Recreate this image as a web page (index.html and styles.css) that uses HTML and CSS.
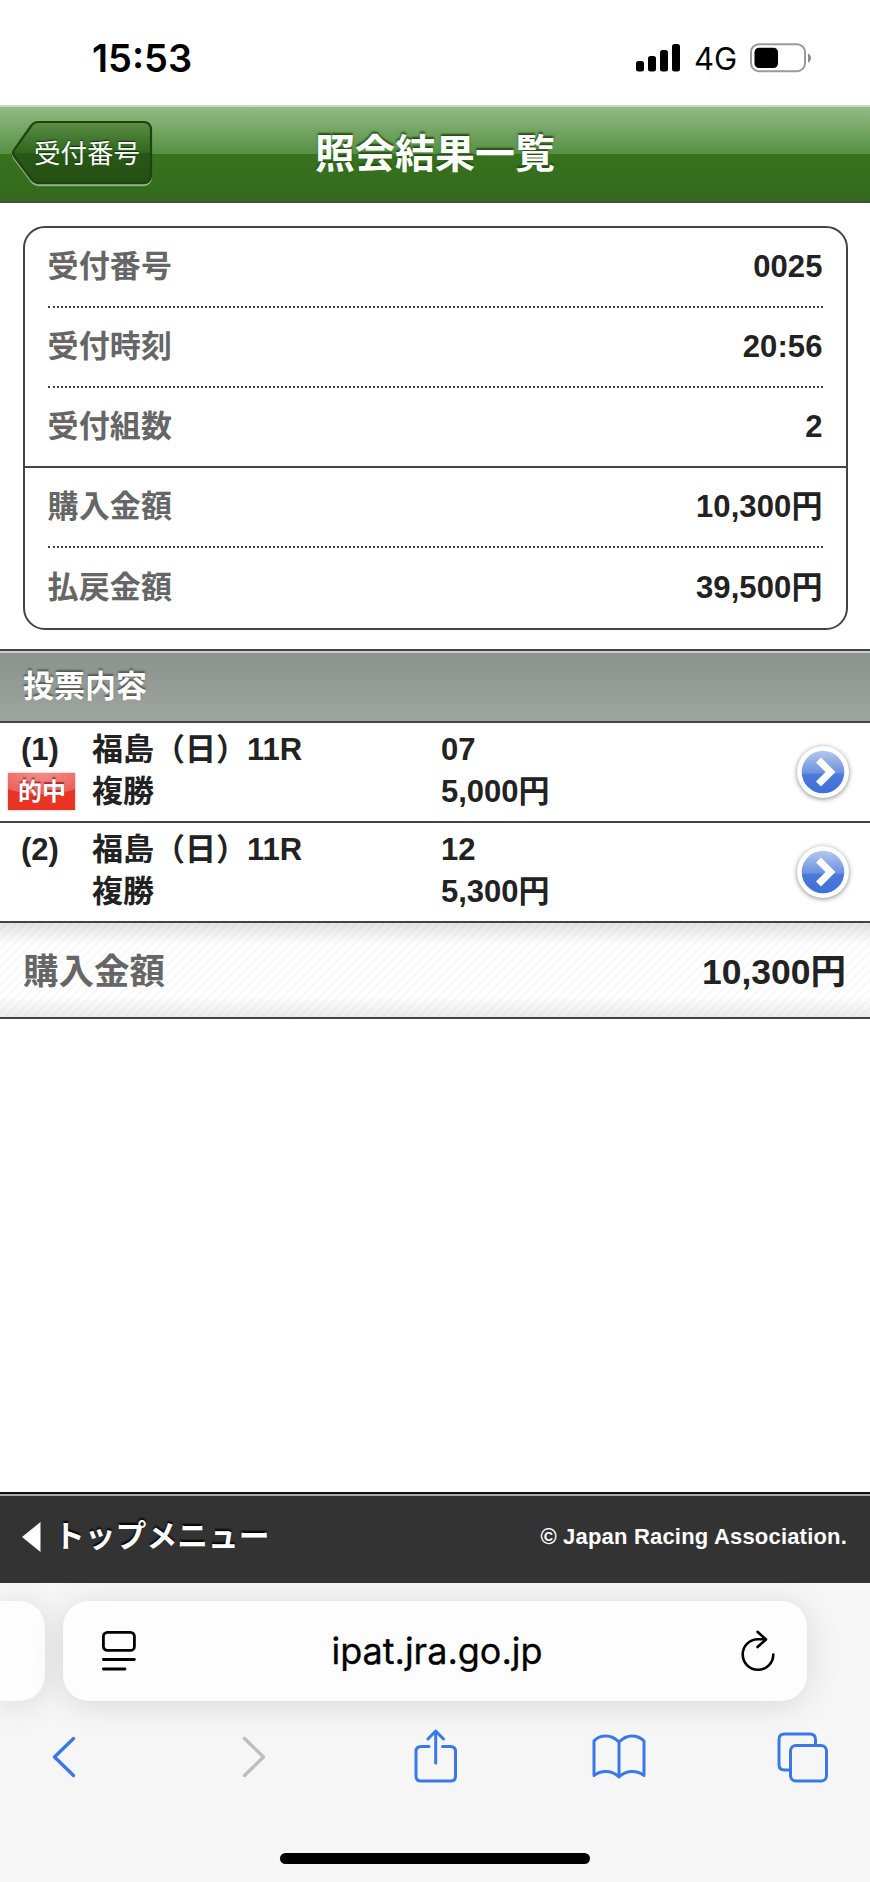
FILE: index.html
```html
<!DOCTYPE html>
<html lang="ja">
<head>
<meta charset="utf-8">
<title>照会結果一覧</title>
<link rel="stylesheet" href="styles.css">
</head>
<body>
<div class="status">
  <span class="clock">15:53</span>
  <svg class="signal" width="44" height="28" viewBox="0 0 44 28"><rect x="0" y="17" width="8" height="10.5" rx="2.5"/><rect x="12" y="12" width="8" height="15.5" rx="2.5"/><rect x="24" y="6" width="8" height="21.5" rx="2.5"/><rect x="36" y="0" width="8" height="27.5" rx="2.5"/></svg>
  <span class="network">4G</span>
  <svg class="battery" width="62" height="30" viewBox="0 0 62 30"><rect x="1" y="1.2" width="54" height="27" rx="8" fill="#fff" stroke="#9a9a9a" stroke-width="2"/><rect x="4.5" y="4.7" width="23.5" height="20.3" rx="4.5"/><path d="M58 10.5c4 1.500 4 7.500 0 9z" fill="#8a8a8a"/></svg>
</div>
<header class="header">
  <a class="back">
    <svg class="back-shape" width="144" height="68" viewBox="0 0 144 68">
      <defs><linearGradient id="g" x1="0" y1="0" x2="0" y2="1"><stop offset="0" stop-color="#5d8d46"/><stop offset=".5" stop-color="#2f671c"/><stop offset=".51" stop-color="#285817"/><stop offset="1" stop-color="#245012"/></linearGradient></defs>
      <path d="M27 3H133a7 7 0 0 1 7 7V57a7 7 0 0 1-7 7H27Q24 64 21 61L3 37Q1 34 3 31L20 7Q23 3 27 3Z" fill="none" stroke="#8fb37c" stroke-width="2" transform="translate(0 1.200)"/>
      <path d="M27 2H133a7 7 0 0 1 7 7V56a7 7 0 0 1-7 7H27Q24 63 21 60L3 36Q1 33 3 30L20 6Q23 2 27 2Z" fill="url(#g)" stroke="#1f4210" stroke-width="2.200"/>
    </svg>
    <span class="back-text">受付番号</span>
  </a>
  <h1 class="title">照会結果一覧</h1>
</header>
<main class="main">
  <dl class="card">
    <div class="item"><dt>受付番号</dt><dd>0025</dd></div>
    <div class="item"><dt>受付時刻</dt><dd>20:56</dd></div>
    <div class="item last"><dt>受付組数</dt><dd>2</dd></div>
    <div class="item"><dt>購入金額</dt><dd>10,300円</dd></div>
    <div class="item end"><dt>払戻金額</dt><dd>39,500円</dd></div>
  </dl>
  <h2 class="section">投票内容</h2>
  <div class="bet">
    <div class="num"><span>(1)</span><span class="hit">的中</span></div>
    <div class="race"><span>福島（日）11R</span><span>複勝</span></div>
    <div class="stake"><span>07</span><span>5,000円</span></div>
    <svg class="arrow" width="64" height="64" viewBox="0 0 64 64"><defs><linearGradient id="b" x1="0" y1="0" x2="0" y2="1"><stop offset="0" stop-color="#b5c9ee"/><stop offset=".52" stop-color="#6c92df"/><stop offset=".56" stop-color="#4c79d9"/><stop offset="1" stop-color="#3d70d8"/></linearGradient></defs><circle class="disc" cx="32" cy="31" r="26"/><circle cx="32" cy="31" r="21.300" fill="url(#b)"/><path d="M27.500 19L39.500 31L27.500 43" fill="none" stroke="#fff" stroke-width="7"/></svg>
  </div>
  <div class="bet">
    <div class="num"><span>(2)</span></div>
    <div class="race"><span>福島（日）11R</span><span>複勝</span></div>
    <div class="stake"><span>12</span><span>5,300円</span></div>
    <svg class="arrow" width="64" height="64" viewBox="0 0 64 64"><circle class="disc" cx="32" cy="31" r="26"/><circle cx="32" cy="31" r="21.300" fill="url(#b)"/><path d="M27.500 19L39.500 31L27.500 43" fill="none" stroke="#fff" stroke-width="7"/></svg>
  </div>
  <div class="total"><span class="total-label">購入金額</span><span>10,300円</span></div>
</main>
<footer class="footer">
  <svg class="tri" width="20" height="30" viewBox="0 0 20 30"><path d="M0 15L18.500 0V30Z" fill="#fff"/></svg>
  <a class="menu">トップメニュー</a>
  <small class="copy">© Japan Racing Association.</small>
</footer>
<div class="browser">
  <div class="tabs">
    <div class="prev"></div>
    <div class="url">
      <svg width="36" height="42" viewBox="0 0 36 42" fill="none" stroke="#000" stroke-width="2.800" stroke-linecap="round"><rect x="2.400" y="2.400" width="31" height="18" rx="4"/><path d="M2.400 29.500H33.400M2.400 39H24"/></svg>
      <span class="host">ipat.jra.go.jp</span>
      <svg width="36" height="42" viewBox="0 0 36 42" fill="none" stroke="#000" stroke-width="2.600" stroke-linecap="round" stroke-linejoin="round"><path d="M33.300 24.500A15.300 15.300 0 1 1 18 9.200H25"/><path d="M17.500 1.800L26 9.500L17.500 17"/></svg>
    </div>
  </div>
  <nav class="tools">
    <svg width="24" height="42" viewBox="0 0 24 42" fill="none" stroke="#3a78e7" stroke-width="3.400" stroke-linecap="round" stroke-linejoin="round"><path d="M21.500 2.500L2.500 21L21.500 39.500"/></svg>
    <svg class="forward" width="24" height="42" viewBox="0 0 24 42" fill="none" stroke="#bdbdbd" stroke-width="3.400" stroke-linecap="round" stroke-linejoin="round"><path d="M2.500 2.500L21.500 21L2.500 39.500"/></svg>
    <svg class="share" width="44" height="54" viewBox="0 0 44 54" fill="none" stroke="#3a78e7" stroke-width="3" stroke-linecap="round" stroke-linejoin="round"><path d="M15 17.500H7Q2 17.500 2 22.500V47Q2 52 7 52H36.500Q41.500 52 41.500 47V22.500Q41.500 17.500 36.500 17.500H28.500"/><path d="M21.700 34V2M14 10L21.700 2L29.500 10"/></svg>
    <svg class="book" width="54" height="46" viewBox="0 0 54 46" fill="none" stroke="#3a78e7" stroke-width="3" stroke-linecap="round" stroke-linejoin="round"><path d="M27 43V8Q21 2 14 2Q6 2 2 7V41.500Q7 37.500 14 37.500Q21 37.500 27 43Q33 37.500 40 37.500Q47 37.500 52 41.500V7Q47 2 40 2Q33 2 27 8"/></svg>
    <svg class="pages" width="52" height="52" viewBox="0 0 52 52" fill="none" stroke="#3a78e7" stroke-width="3"><path d="M12.500 38H7.500Q2 38 2 32.500V7.500Q2 2 7.500 2H33Q38.500 2 38.500 7.500V12.500"/><rect x="13.500" y="13.500" width="36" height="35.500" rx="5.500"/></svg>
  </nav>
  <div class="home"></div>
</div>
</body>
</html>
```

FILE: styles.css
```css
* { box-sizing: border-box; }
body {
  margin: 0;
  width: 870px;
  height: 1882px;
  display: flex;
  flex-direction: column;
  overflow: hidden;
  background: #fff;
  color: #222;
  font: bold 31px/42px "Liberation Sans", "Noto Sans CJK JP", sans-serif;
  text-spacing-trim: space-all;
}
svg { display: block; flex: none; }
h1, h2, dl, dd { margin: 0; }

.status {
  height: 105px;
  display: flex;
  align-items: center;
  padding: 11px 58px 0 92px;
  color: #000;
  font-family: Inter, sans-serif;
}
.clock { font-size: 38px; font-weight: 600; }
.signal { margin-left: auto; }
.network { margin: 1px 0 0 14px; width: 54px; font-size: 31px; font-weight: 400; }
.battery { margin-left: 2px; }

.header {
  height: 98px;
  display: grid;
  grid-template-columns: 1fr auto 1fr;
  align-items: center;
  border-top: 2px solid #c4dcb9;
  border-bottom: 2px solid #474b42;
  background: linear-gradient(#92ba83 0, #559043 50%, #37731f 50%, #33691d 100%);
}
.back { position: relative; width: 144px; margin-left: 11px; }
.back-text {
  position: absolute;
  left: 23px;
  top: 13px;
  color: #fff;
  font-size: 26.500px;
  font-weight: 400;
  text-shadow: 0 -1px 1px #12300a;
}
.title {
  grid-column: 2;
  color: #fff;
  font-size: 40px;
  line-height: 58px;
  text-shadow: 0 -2px 2px #234a14;
}

.main { flex: 1; }
.card {
  margin: 22.500px 22.500px 19.500px 22.500px;
  height: 404px;
  border: 2px solid #444;
  border-radius: 22px;
  display: grid;
  grid-template-rows: repeat(5, 1fr);
}
.item {
  margin: 0 23px;
  display: flex;
  justify-content: space-between;
  align-items: center;
  padding-top: 1px;
  border-bottom: 2px dotted #444;
}
.item.last { margin: 0; padding: 1px 23px 0; border-bottom-style: solid; }
.item.end { border: 0; }
dt { color: #666; letter-spacing: .15px; }
dd { letter-spacing: .1px; }
.section {
  height: 74px;
  padding-left: 23px;
  border-top: 2px solid #444;
  border-bottom: 2px solid #444;
  box-shadow: inset 0 2px #c9cdca;
  background: linear-gradient(#8a928c, #9fa59f);
  color: #fff;
  font-size: 31px;
  line-height: 71px;
  text-shadow: 0 -2px 2px #555;
}
.bet {
  height: 100px;
  display: grid;
  grid-template-columns: 92px 349px 1fr 64px;
  align-items: start;
  padding: 6px 15px 0 0;
  border-bottom: 2px solid #444;
}
.num, .race, .stake { display: flex; flex-direction: column; }
.num > span:first-child { margin-left: 21px; }
.hit {
  margin: 2px 0 0 8px;
  width: 67px;
  height: 37px;
  padding-left: 1px;
  text-align: center;
  color: #fff;
  font-size: 24px;
  line-height: 37px;
  background: radial-gradient(ellipse 80% 58% at 50% 0, #f18f8b 0, #ec6059 96%, transparent 100%), linear-gradient(#ee5a52, #e93323 45%);
  box-shadow: 0 0 2px #ee9c98;
  text-shadow: 0 -2px 1px #a93028;
}
.arrow { margin-top: 12px; }
.disc { fill: #fff; filter: drop-shadow(0 1.500px 2.500px #888); }
.total {
  height: 96px;
  display: flex;
  align-items: center;
  justify-content: space-between;
  padding: 3px 24px 0 23px;
  border-bottom: 2px solid #444;
  background:
    linear-gradient(#0000001c, #0000 24%, #0000 78%, #00000014),
    repeating-linear-gradient(135deg, #fff 0, #fff 4px, #f5f5f5 5px, #fff 6.500px);
  font-size: 35.500px;
  line-height: 50px;
}
.total-label { color: #666; }

.footer {
  height: 91px;
  display: flex;
  align-items: center;
  padding: 0 23px 3px 22px;
  border-top: 2px solid #111;
  box-shadow: inset 0 2px #aaa;
  background: #333;
  color: #fff;
}
.menu { margin-left: 12px; font-size: 30.800px; text-shadow: 0 -2px 2px #000; }
.copy { margin-left: auto; font-size: 22px; letter-spacing: .19px; }

.browser {
  height: 299px;
  padding-top: 18px;
  background: #f6f6f7;
  overflow: hidden;
}
.tabs { display: flex; gap: 18px; height: 100px; }
.prev { width: 45px; border-radius: 0 26px 26px 0; }
.url {
  width: 744px;
  border-radius: 26px;
  display: flex;
  align-items: center;
  justify-content: space-between;
  padding: 0 31px 0 38px;
}
.prev, .url { background: #fdfdfd; box-shadow: 0 4px 32px #0000001f; }
.host {
  color: #000;
  margin-right: 3px;
  font: 400 36px/44px Inter, sans-serif;
  -webkit-text-stroke: .3px #000;
}
.tools {
  height: 112px;
  display: flex;
  align-items: center;
  padding: 0 41px 0 52px;
}
.forward { margin-left: 166px; }
.share { margin-left: 148px; margin-top: -2px; }
.book { margin-left: 134px; }
.pages { margin-left: 131px; margin-top: 1px; }
.home {
  width: 310px;
  height: 11px;
  margin: 40px auto 0;
  border-radius: 6px;
  background: #000;
}
```
